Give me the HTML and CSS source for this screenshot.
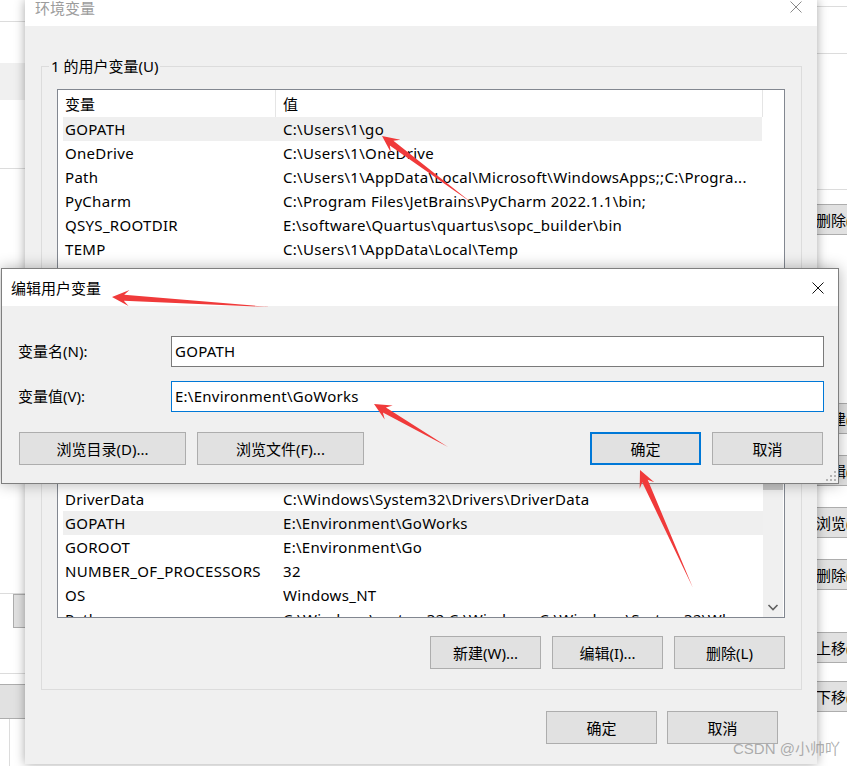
FILE: index.html
```html
<!DOCTYPE html>
<html>
<head>
	<meta charset="utf-8">
	<title>环境变量</title>
	<link rel="stylesheet" href="styles.css">
</head>
<body>

<div class="backWin">
	<div class="backLeft">
		<div class="bkBlock bkLine" style="height:21px"></div>
		<div class="bkBlock" style="height:41px"></div>
		<div class="bkBlock bkGrey" style="height:37px"></div>
		<div class="bkBlock bkLine" style="height:68px"></div>
		<div class="bkBlock" style="height:403px"></div>
		<div class="bkBlock bkLine" style="height:21px"></div>
		<div class="bkBtnSmall"></div>
		<div class="bkBlock bkLine" style="height:45px"></div>
		<div class="bkBtnWide"></div>
		<div class="bkBlock bkVert"></div>
	</div>
	<div class="backRight">
		<div class="bkBlock bkLine" style="height:6px"></div>
		<div class="bkBlock bkLine" style="height:46px"></div>
		<div class="bkBlock bkLine" style="height:135px"></div>
		<button class="bkBtn" style="margin-top:14px">删除(D)</button>
		<button class="bkBtn" style="margin-top:168px">新建(N)</button>
		<button class="bkBtn">编辑(E)</button>
		<button class="bkBtn">浏览(B)</button>
		<button class="bkBtn">删除(D)</button>
		<button class="bkBtn" style="margin-top:42px">上移(U)</button>
		<button class="bkBtn" style="margin-top:18px">下移(O)</button>
	</div>
</div>

<div class="envWin">
	<div class="envTitle">
		<span>环境变量</span>
		<svg class="closeIcon" width="12" height="12" viewBox="0 0 12 12"><path d="M0.5 0.5 L11.5 11.5 M11.5 0.5 L0.5 11.5" stroke="#8a8a8a" stroke-width="1" fill="none"/></svg>
	</div>
	<div class="envBody">
		<fieldset class="group">
			<legend>1 的用户变量(U)</legend>
			<div class="groupInner">
				<div class="varList">
					<div class="listTop">
						<div class="listHead">
							<div class="hcName">变量</div>
							<div class="hcValue">值</div>
						</div>
						<div class="row sel"><div class="k">GOPATH</div><div class="v">C:\Users\1\go</div></div>
						<div class="row"><div class="k">OneDrive</div><div class="v">C:\Users\1\OneDrive</div></div>
						<div class="row"><div class="k">Path</div><div class="v">C:\Users\1\AppData\Local\Microsoft\WindowsApps;;C:\Progra...</div></div>
						<div class="row"><div class="k">PyCharm</div><div class="v">C:\Program Files\JetBrains\PyCharm 2022.1.1\bin;</div></div>
						<div class="row"><div class="k">QSYS_ROOTDIR</div><div class="v">E:\software\Quartus\quartus\sopc_builder\bin</div></div>
						<div class="row"><div class="k">TEMP</div><div class="v">C:\Users\1\AppData\Local\Temp</div></div>
						<div class="row"><div class="k">TMP</div><div class="v">C:\Users\1\AppData\Local\Temp</div></div>
					</div>
					<div></div>
					<div class="listBottom">
						<div class="rows2">
							<div class="row"><div class="k">DriverData</div><div class="v">C:\Windows\System32\Drivers\DriverData</div></div>
							<div class="row sel"><div class="k">GOPATH</div><div class="v">E:\Environment\GoWorks</div></div>
							<div class="row"><div class="k">GOROOT</div><div class="v">E:\Environment\Go</div></div>
							<div class="row"><div class="k">NUMBER_OF_PROCESSORS</div><div class="v">32</div></div>
							<div class="row"><div class="k">OS</div><div class="v">Windows_NT</div></div>
							<div class="row"><div class="k">Path</div><div class="v">C:\Windows\system32;C:\Windows;C:\Windows\System32\Wbem;</div></div>
						</div>
						<div class="vScroll">
							<div class="thumb"></div>
							<svg class="scrollArrow" width="20" height="20" viewBox="0 0 20 20"><path d="M5.5 8 L10 12.5 L14.5 8" stroke="#606060" stroke-width="1.6" fill="none"/></svg>
						</div>
					</div>
				</div>
				<div class="btnRow">
					<button class="btn">新建(W)...</button>
					<button class="btn">编辑(I)...</button>
					<button class="btn">删除(L)</button>
				</div>
			</div>
		</fieldset>
		<div class="envFoot">
			<button class="btn">确定</button>
			<button class="btn">取消</button>
		</div>
	</div>
</div>

<div class="editWin">
	<div class="editTitle">
		<span>编辑用户变量</span>
		<svg class="closeIcon" width="12" height="12" viewBox="0 0 12 12"><path d="M0.5 0.5 L11.5 11.5 M11.5 0.5 L0.5 11.5" stroke="#111" stroke-width="1" fill="none"/></svg>
	</div>
	<div class="editBody">
		<label class="lbl">变量名(N):</label>
		<div class="field">GOPATH</div>
		<label class="lbl">变量值(V):</label>
		<div class="field focus">E:\Environment\GoWorks</div>
		<div class="editBtns">
			<button class="btn wide">浏览目录(D)...</button>
			<button class="btn wide">浏览文件(F)...</button>
			<span class="spacer"></span>
			<button class="btn focus">确定</button>
			<button class="btn">取消</button>
		</div>
	</div>
	<svg class="grip" width="12" height="12" viewBox="0 0 12 12">
		<rect x="9" y="1" width="2" height="2" fill="#b4b4b4"/>
		<rect x="9" y="5" width="2" height="2" fill="#b4b4b4"/>
		<rect x="5" y="5" width="2" height="2" fill="#b4b4b4"/>
		<rect x="9" y="9" width="2" height="2" fill="#b4b4b4"/>
		<rect x="5" y="9" width="2" height="2" fill="#b4b4b4"/>
		<rect x="1" y="9" width="2" height="2" fill="#b4b4b4"/>
	</svg>
</div>

<svg class="marks" width="847" height="766" viewBox="0 0 847 766">
	<polygon points="472,203 393.4,140.8 400.4,139.7 382,136 390.9,152.6 389.8,145.6"/>
	<polygon points="270,307 124.2,294.8 129.5,290.1 112,297 128.5,306.1 123.8,300.7"/>
	<polygon points="448,447 385.9,407.4 392.7,405.6 374,404 384.7,419.5 382.9,412.6"/>
	<polygon points="693,588 647.7,479.7 654.3,482.2 640,470 639.7,488.8 642.2,482.2"/>
</svg>

<div class="watermark">CSDN @小帅吖</div>

</body>
</html>
```

FILE: styles.css
```css
body {
	margin: 0;
	width: 847px;
	height: 766px;
	overflow: hidden;
	position: relative;
	background: #fff;
	color: #000;
	font-family: "Noto Sans", "Noto Sans CJK SC", sans-serif;
	font-size: 15px;
}

/* window behind */
.backWin {position: absolute;top: 0;left: 0;right: 0;bottom: 0;display: flex;justify-content: space-between;}
.backLeft {width: 25px;display: flex;flex-direction: column;}
.backRight {width: 57px;display: flex;flex-direction: column;}
.bkBlock {flex: none;}
.bkLine {border-bottom: 1px solid #dcdcdc;}
.bkGrey {background: #f0f0f0;}
.bkVert {flex: 1;margin-left: 9px;border-left: 1px solid #dcdcdc;}
.bkBtnSmall {height: 32px;margin: 0 0 0 13px;background: #e1e1e1;border: 1px solid #adadad;border-right: 0;}
.bkBtnWide {height: 33px;margin-top: 10px;background: #e1e1e1;border: 1px solid #adadad;border-left: 0;border-right: 0;}
.bkBtn {
	height: 31px;
	margin: 21px 0 0 0;
	padding: 0 0 0 25px;
	text-align: left;
	background: #e1e1e1;
	border: 1px solid #adadad;
	border-right: 0;
	font: inherit;
	color: #000;
	white-space: nowrap;
	overflow: hidden;
}

/* environment variables window */
.envWin {
	position: absolute;
	left: 25px;
	top: 0;
	width: 792px;
	height: 764px;
	background: #f0f0f0;
	box-shadow: 0 0 10px rgba(0,0,0,0.35);
}
.envTitle {height: 26px;background: #fff;display: flex;justify-content: space-between;padding: 0 15px 0 10px;line-height: 16px;color: #9c9c9c;}
.envTitle .closeIcon {margin-top: 1px;}
.envBody {padding: 30px 15px 0 16px;}

.group {margin: 0;padding: 0;border: 1px solid #dcdcdc;min-width: 0;}
.group legend {margin-left: 7px;padding: 0 2px;line-height: 20px;}
.groupInner {padding: 13px 16px 20px 15px;}

.varList {
	height: 529px;
	box-sizing: border-box;
	border: 1px solid #828790;
	background: #fff;
	display: grid;
	grid-template-rows: auto 1fr 133px;
	overflow: hidden;
}
.listHead {display: flex;width: 705px;height: 27px;line-height: 28px;box-sizing: border-box;border-right: 1px solid #e5e5e5;}
.hcName {width: 218px;box-sizing: border-box;padding-left: 7px;border-right: 1px solid #e5e5e5;}
.hcValue {flex: 1;padding-left: 7px;}

.row {display: flex;height: 24px;line-height: 24px;margin-left: 5px;width: 699px;white-space: nowrap;letter-spacing: 0.3px;}
.row.sel {background: #efefef;}
.row .k {width: 220px;flex: none;box-sizing: border-box;padding-left: 2px;overflow: hidden;}
.row .v {flex: 1;overflow: hidden;}

.listBottom {display: flex;overflow: hidden;}
.rows2 {flex: 1;padding-top: 3px;overflow: hidden;}
.rows2 .row {width: 700px;}
.vScroll {width: 20px;margin-right: 1px;background: #f0f0f0;display: flex;flex-direction: column;justify-content: space-between;}
.thumb {height: 6px;background: #c6c6c6;}
.scrollArrow {display: block;}

.btn {
	width: 111px;
	height: 33px;
	box-sizing: border-box;
	padding: 0;
	background: #e1e1e1;
	border: 1px solid #adadad;
	font: inherit;
	color: #000;
	white-space: nowrap;
}
.btn.wide {width: 167px;}
.btn.focus {border: 2px solid #0078d7;}

.btnRow {display: flex;justify-content: flex-end;gap: 11px;margin-top: 18px;}
.envFoot {display: flex;justify-content: flex-end;gap: 10px;padding: 21px 24px 0 0;}

/* edit dialog */
.editWin {
	position: absolute;
	left: 1px;
	top: 268px;
	width: 838px;
	height: 216px;
	box-sizing: border-box;
	border: 1px solid #7f7f7f;
	background: #f0f0f0;
	box-shadow: 0 0 14px rgba(0,0,0,0.3);
	display: flex;
	flex-direction: column;
}
.editTitle {height: 37px;flex: none;background: #fff;display: flex;align-items: center;justify-content: space-between;padding: 0 14px 0 9px;}
.editBody {padding: 30px 14px 0 16px;display: grid;grid-template-columns: 153px 1fr;row-gap: 14px;}
.lbl {line-height: 31px;}
.field {height: 31px;box-sizing: border-box;border: 1px solid #7a7a7a;background: #fff;padding-left: 3px;line-height: 28px;letter-spacing: 0.25px;}
.field.focus {border-color: #0078d7;}
.editBtns {grid-column: 1 / 3;display: flex;gap: 11px;margin: 6px 1px 0 1px;}
.editBtns .spacer {flex: 1;}
.grip {position: absolute;right: 1px;bottom: 1px;}

.marks {position: absolute;left: 0;top: 0;pointer-events: none;}
.marks polygon {fill: #f03a3a;}

.watermark {
	position: absolute;
	left: 733px;
	top: 739px;
	font-family: "Liberation Sans", "Noto Sans CJK SC", sans-serif;
	font-size: 15px;
	line-height: 20px;
	color: rgba(140,140,140,0.7);
}
```
